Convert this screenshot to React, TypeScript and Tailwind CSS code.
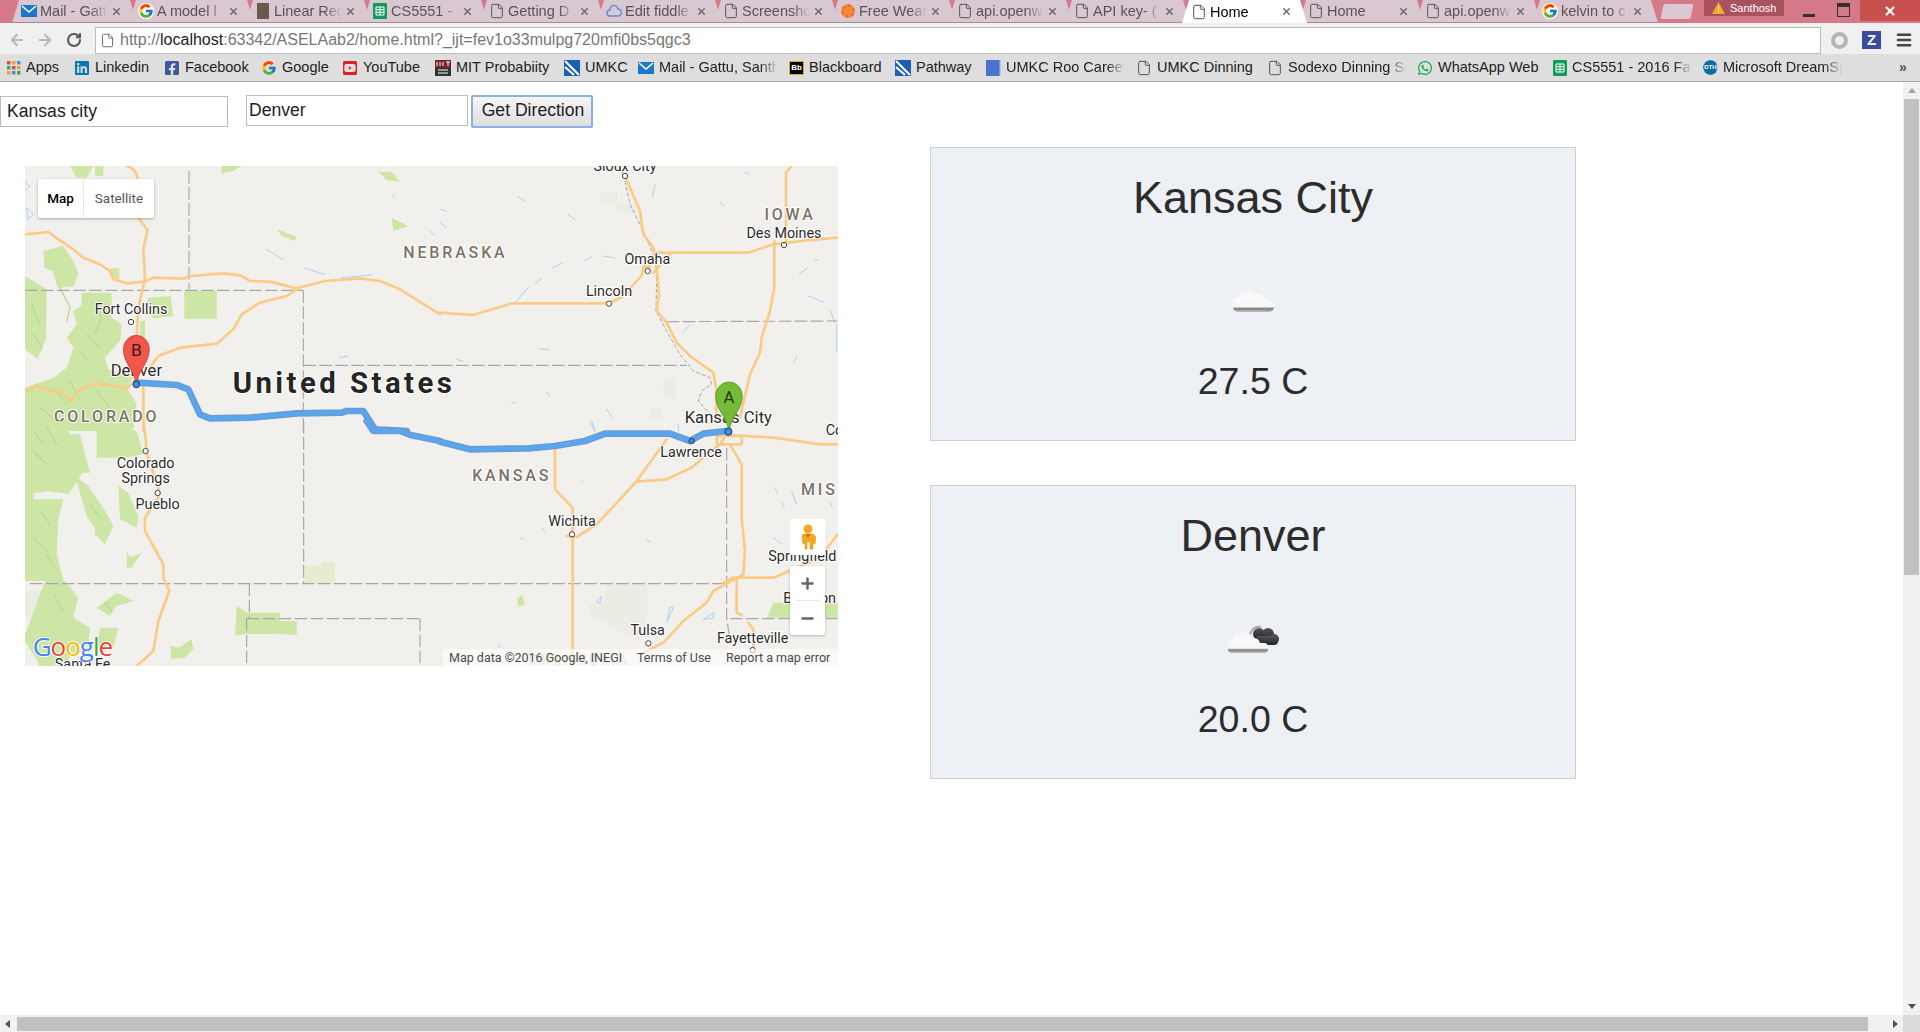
import { ArrowLeft, ArrowRight, RotateCw, File, Menu, X, Minus, Plus } from "lucide-react"
import { FaFacebookSquare, FaLinkedin, FaWhatsapp, FaYoutubeSquare } from "react-icons/fa"
import { FcGoogle } from "react-icons/fc"
import type { ReactNode } from "react"

function MailIcon() {
  return (
    <svg width="16" height="16" viewBox="0 0 16 16" className="shrink-0">
      <rect x="0" y="2" width="16" height="12" fill="#1c78c6" />
      <path d="M1 3 L8 9 L15 3" fill="none" stroke="#fff" strokeWidth="1.6" />
    </svg>
  )
}

function SheetIcon() {
  return (
    <svg width="14" height="16" viewBox="0 0 14 16" className="shrink-0">
      <rect width="14" height="16" rx="1" fill="#119a5a" />
      <path d="M3 4h8v8H3z M3 6.700h8 M3 9.300h8 M7 4v8" fill="none" stroke="#fff" strokeWidth="1" />
    </svg>
  )
}

function UmkcIcon() {
  return (
    <svg width="16" height="16" viewBox="0 0 16 16" className="shrink-0">
      <rect width="16" height="16" fill="#1a5fb4" />
      <path d="M1 1 L15 15 M1 7 L10 15" stroke="#fff" strokeWidth="2" />
    </svg>
  )
}

function MitIcon() {
  return (
    <svg width="16" height="16" viewBox="0 0 16 16" className="shrink-0">
      <rect width="16" height="16" fill="#7a2230" />
      <rect y="8" width="16" height="8" fill="#333" />
      <path d="M2 2v4 M5 2v4 M8 2v4 M11 2h4 M13 2v4 M3 10h10 M3 13h10" stroke="#fff" strokeWidth="1" />
    </svg>
  )
}

function AppsIcon() {
  const colors = ["#d9503f", "#e8a33d", "#4a90d9", "#3fa35a", "#d9503f", "#e8a33d", "#e8a33d", "#4a90d9", "#3fa35a"]
  return (
    <svg width="14" height="14" viewBox="0 0 14 14" className="shrink-0">
      {colors.map((c, i) => (
        <rect key={i} x={(i % 3) * 5} y={Math.floor(i / 3) * 5} width="3.500" height="3.500" fill={c} />
      ))}
    </svg>
  )
}

function BlankIcon() {
  return <File size={16} strokeWidth={1.5} className="shrink-0 text-[#555]" />
}

function Tab({ icon, title, active }: { icon: ReactNode; title: string; active?: boolean }) {
  return (
    <div
      className={`relative -mr-[8px] flex h-[23px] w-[125px] shrink-0 items-center gap-[3px] pl-[9px] pr-[10px] [clip-path:polygon(7px_0,calc(100%-7px)_0,100%_100%,0_100%)] ${
        active ? "z-10 bg-white text-black" : "border-b border-[#a58a96] bg-[#d9c8d1] text-[#5a5256]"
      }`}
    >
      <span className="flex w-[16px] shrink-0 justify-center">{icon}</span>
      <span className="min-w-0 flex-1 overflow-hidden whitespace-nowrap text-[14.5px] leading-[22px] [mask-image:linear-gradient(to_right,black_75%,transparent)]">
        {title}
      </span>
      <X size={11} strokeWidth={3} className="mr-[5px] shrink-0 text-[#666]" />
    </div>
  )
}

const tabs: { icon: ReactNode; title: string; active?: boolean }[] = [
  { icon: <MailIcon />, title: "Mail - Gattu" },
  { icon: <FcGoogle size={16} className="rounded-full bg-white" />, title: "A model l" },
  { icon: <span className="block h-[16px] w-[12px] bg-[#6b5a4c]" />, title: "Linear Reg" },
  { icon: <SheetIcon />, title: "CS5551 - 2" },
  { icon: <BlankIcon />, title: "Getting D" },
  {
    icon: (
      <svg width="16" height="14" viewBox="0 0 16 14" className="shrink-0">
        <path d="M4 12 a3 3 0 0 1 0-6 a4 4 0 0 1 8-1 a3 3 0 0 1 0 7 z" fill="none" stroke="#5b8fd8" strokeWidth="1.4" />
      </svg>
    ),
    title: "Edit fiddle",
  },
  { icon: <BlankIcon />, title: "Screenshot" },
  { icon: <span className="block h-[14px] w-[14px] rounded-full border-[3px] border-dotted border-[#ee6e2a] bg-[#f48a3a]" />, title: "Free Weat" },
  { icon: <BlankIcon />, title: "api.openw" },
  { icon: <BlankIcon />, title: "API key- (" },
  { icon: <BlankIcon />, title: "Home", active: true },
  { icon: <BlankIcon />, title: "Home" },
  { icon: <BlankIcon />, title: "api.openw" },
  { icon: <FcGoogle size={16} className="rounded-full bg-white" />, title: "kelvin to c" },
]

const bookmarks: { icon: ReactNode; label: string; cls: string }[] = [
  { icon: <AppsIcon />, label: "Apps", cls: "w-[67px]" },
  { icon: <FaLinkedin size={16} className="shrink-0 text-[#0a77b5]" />, label: "Linkedin", cls: "w-[90px]" },
  { icon: <FaFacebookSquare size={16} className="shrink-0 text-[#3b5998]" />, label: "Facebook", cls: "w-[97px]" },
  { icon: <FcGoogle size={16} className="shrink-0" />, label: "Google", cls: "w-[81px]" },
  { icon: <FaYoutubeSquare size={16} className="shrink-0 text-[#d9252a]" />, label: "YouTube", cls: "w-[93px]" },
  { icon: <MitIcon />, label: "MIT Probabiity", cls: "w-[129px]" },
  { icon: <UmkcIcon />, label: "UMKC", cls: "w-[74px]" },
  { icon: <MailIcon />, label: "Mail - Gattu, Santhosh", cls: "w-[151px] pr-[11px] [&>span]:[mask-image:linear-gradient(to_right,black_85%,transparent)]" },
  { icon: <span className="flex h-[14px] w-[15px] shrink-0 items-center justify-center border border-[#d9a520] bg-black text-[8px] font-bold text-white">Bb</span>, label: "Blackboard", cls: "w-[106px]" },
  { icon: <UmkcIcon />, label: "Pathway", cls: "w-[91px]" },
  { icon: <span className="block h-[16px] w-[15px] shrink-0 bg-[#4a74d0]" />, label: "UMKC Roo Career", cls: "w-[150px] pr-[11px] [&>span]:[mask-image:linear-gradient(to_right,black_85%,transparent)]" },
  { icon: <BlankIcon />, label: "UMKC Dinning", cls: "w-[131px]" },
  { icon: <BlankIcon />, label: "Sodexo Dinning Services", cls: "w-[150px] pr-[11px] [&>span]:[mask-image:linear-gradient(to_right,black_85%,transparent)]" },
  { icon: <FaWhatsapp size={16} className="shrink-0 text-[#12a84a]" />, label: "WhatsApp Web", cls: "w-[136px]" },
  { icon: <SheetIcon />, label: "CS5551 - 2016 Fall", cls: "w-[150px] pr-[11px] [&>span]:[mask-image:linear-gradient(to_right,black_85%,transparent)]" },
  { icon: <span className="flex h-[15px] w-[15px] shrink-0 items-center justify-center rounded-full bg-[#0a6ea8] text-[6px] font-bold text-white">DTH</span>, label: "Microsoft DreamSpark", cls: "w-[150px] pr-[11px] [&>span]:[mask-image:linear-gradient(to_right,black_85%,transparent)]" },
]

function BrowserChrome() {
  return (
    <header className="h-[82px] shrink-0 font-['Liberation_Sans',sans-serif]">
      <div className="relative flex h-[23px] bg-[#d67a8a] pl-[12px]">
        {tabs.map((t, i) => (
          <Tab key={i} {...t} />
        ))}
        <div className="ml-[12px] mt-[4px] h-[15px] w-[30px] -skew-x-12 rounded-[2px] bg-[#dcc8d2]" />
        <div className="ml-auto flex h-[21px] items-start">
          <div className="flex h-[16px] w-[80px] items-center gap-[5px] bg-[#a9525f] pl-[8px] text-[11px] text-white">
            <svg width="13" height="12" viewBox="0 0 13 12" className="shrink-0">
              <path d="M6.500 0L13 12H0z" fill="#f7a81c" />
              <path d="M6.500 4v4M6.500 9v1.500" stroke="#fff" strokeWidth="1.200" />
            </svg>
            Santhosh
          </div>
          <div className="ml-[8px] flex w-[34px] justify-center pt-[14px]">
            <span className="block h-[3px] w-[12px] bg-[#333]" />
          </div>
          <div className="flex w-[34px] justify-center pt-[3px]">
            <span className="block h-[14px] w-[13px] border border-t-[4px] border-[#333]" />
          </div>
          <div className="flex h-[21px] w-[60px] items-center justify-center bg-[#c8504f] text-white">
            <X size={14} strokeWidth={3.5} />
          </div>
        </div>
      </div>
      <div className="flex h-[31px] items-center bg-[#f0f0f0] pt-[3px]">
        <div className="flex w-[95px] items-center pl-[8px]">
          <ArrowLeft size={18} strokeWidth={2.5} className="text-[#b8b8b8]" />
          <ArrowRight size={18} strokeWidth={2.5} className="ml-[10px] text-[#b8b8b8]" />
          <RotateCw size={16} strokeWidth={3} className="ml-[12px] text-[#555]" />
        </div>
        <div className="flex h-[27px] w-[1726px] items-center border border-[#bdbdbd] bg-white pl-[4px] text-[16px]">
          <File size={15} strokeWidth={1.5} className="text-[#666]" />
          <span className="ml-[5px] whitespace-nowrap text-[#777]">
            http://<span className="text-[#222]">localhost</span>:63342/ASELAab2/home.html?_ijt=fev1o33mulpg720mfi0bs5qgc3
          </span>
        </div>
        <div className="ml-[10px] h-[17px] w-[17px] rounded-full border-[4px] border-[#b5b5b5]" />
        <div className="ml-[14px] flex h-[18px] w-[19px] items-center justify-center bg-[#3a4ca0] text-[15px] font-bold text-white">Z</div>
        <Menu size={18} strokeWidth={3.5} className="ml-[14px] text-[#444]" />
      </div>
      <div className="relative flex h-[28px] items-center border-b border-[#a9a9a9] bg-[#dedede] pl-[7px] text-[14.5px] text-[#222]">
        {bookmarks.map((b, i) => (
          <div key={i} className={`flex shrink-0 items-center gap-[5px] ${b.cls}`}>
            {b.icon}
            <span className="min-w-0 flex-1 overflow-hidden whitespace-nowrap">{b.label}</span>
          </div>
        ))}
        <span className="absolute left-[1899px] top-[3px] text-[14px] font-bold text-[#555]">»</span>
      </div>
    </header>
  )
}

const road = { fill: "none", stroke: "#fbcb85", strokeWidth: 8, strokeLinejoin: "round" as const, strokeLinecap: "round" as const }
const border = { fill: "none", stroke: "#a8a7a5", strokeWidth: 3.5, strokeDasharray: "38 10" }
const green = "#cde6a5"
const tan = "#ecebe4"
const water = { fill: "none", stroke: "#a9cffa", strokeWidth: 3, strokeLinecap: "round" as const }
const ridge = { fill: "none", stroke: "#bcd998", strokeWidth: 4, strokeLinecap: "round" as const }
const routePath = {
  upper: "M350 665l120 7 35 13 35 75 30 12 120-2 140-13 135-2 15-5h50l35 55 95 5",
  middle: "M1040 0l20 30h80l35 13 85 17",
  lower: "M0 62l90 23 175-3 80-7 90-15 60-22h195l60 22 40-22 70-8",
}

function City({ x, y }: { x: number; y: number }) {
  return <circle cx={x} cy={y} r="8" fill="#fff" stroke="#444" strokeWidth="3" />
}

function Label({ x, y, children, anchor = "middle", size = 43 }: { x: number; y: number; children: string; anchor?: "middle" | "start"; size?: number }) {
  return (
    <text x={x} y={y} textAnchor={anchor} fontSize={size} fill="#2a2a2a" stroke="#fff" strokeWidth="6" paintOrder="stroke" strokeLinejoin="round">
      {children}
    </text>
  )
}

function Region({ x, y, children, anchor = "middle", spacing = 8.5, size = 48 }: { x: number; y: number; children: string; anchor?: "middle" | "start"; spacing?: number; size?: number }) {
  return (
    <text x={x} y={y} textAnchor={anchor} fontSize={size} fontWeight={500} letterSpacing={spacing} fill="#7b7364" stroke="#fff" strokeWidth="6" paintOrder="stroke" strokeLinejoin="round">
      {children}
    </text>
  )
}

function Route({ d }: { d: string }) {
  return (
    <>
      <path d={d} stroke="#6b9bcf" strokeWidth="20" />
      <path d={d} stroke="#58a6f0" strokeWidth="12" />
    </>
  )
}

function MapArt() {
  return (
    <svg viewBox="25 165 813 500" className="block h-[500px] w-[813px] font-[Roboto]">
      <rect x="25" y="165" width="813" height="500" fill="#f2f0ed" />

      {/* upper left quarter */}
      <g transform="translate(20 160) scale(.33333)">
        <g fill={green}>
          <path d="M150 15h70l-20 35h-30z M605 15h60l-25 15-35 8z M1075 32l40 0 25 30-40-5z M1115 170l50 25-45 15z M770 205l60 22-5 13-40-15z" />
          <path d="M70 270l60-15 30 45 15 35-12 40-50 5-15-50-25-10z M270 322h28v33l-28-10z M382 410l70-5 8 60-60 8-18-30z M493 390h97v83h-97z" />
          <path d="M15 345l65 40-2 150-25 60-38-30z" />
          <path d="M185 395h90v75l30 20-5 50-45 50 10 35 75 25-20 30 30 50-10 80H15V680l85-30 40-30 20-60-20-30 30-40-10-40 25-15z" />
          <path d="M225 15h25v30h-25z M360 480h15v60l-15 30z" />
        </g>
        <path d="M120 380l30 60-10 40 M215 420l30 50-20 50 M200 520l40 40 M180 570l25 30 M100 680l40 50 M150 660l30 60 M230 690l40 50 M60 740l50 40 M35 430l25 60 M40 520l25 40" {...ridge} />
        <path d="M15 60l15 15-15 15z M20 140l20 20-15 15z M740 265l50 32 M855 322l60 18 M965 350l90-8 M958 590l25-5 M1115 100l10 12 M1230 210l15 15" {...water} />
        <path d="M507 30V385 M15 388H850 M850 388V810 M850 613H1260" {...border} />
        <path d="M320 15q30 10 32 35l3 120 28 38-13 55 5 92-20 85-5 90 0 150M370 670v140" {...road} />
        <path d="M15 220l70-7 30 22 45 30 30 25 50 20 30 20 10 25 40 12 55-5 25-12 90 3 20-8 100-8 50 6 30 17 60 2 80 20 85-22 105-8 60 8 60 25 120 75" {...road} />
        <path d="M385 625l30-40 65-25 110-12 50-43 25-45 55-35 80-20 35-23" {...road} />
        <path d="M15 690l35-15 40 15 40 5 18 27 27-32 45-22 40 2 60 12 25-22" {...road} />
        <Region x={1150} y={292} anchor="start">NEBRASKA</Region>
        <Region x={260} y={784}>COLORADO</Region>
      </g>

      {/* upper right quarter */}
      <g transform="translate(440 160) scale(.33333)">
        <path d="M483 95h50v30h67v30h-70v-30h-47z M670 650h38v70l-38-12z M633 740h35v35h-35z" fill={tan} />
        <path d="M232 105l22 15 M385 160l20 16 M645 70l-8 38 M840 122l10 12 M915 35l10 5 M335 322l30-15 M285 368l20-15 M225 425l40-45 M435 298l20-10 M490 285l35 6 M1105 405l45 18 M1078 338l25-18 M1172 450l12 35 M1190 490v80 M730 515l20-25 M1062 603l8-18 M300 563l28 3 M48 595l22 6 M320 695l10 8 M500 745l20 28 M450 785l15 25 M215 725h10 M1125 298h10 M0 145l20 5 M0 185l18 15" {...water} />
        <path d="M555 60l15 70 35 70 35 80 10 60-2 110 32 60 40 70 40 50 50 20 5 20-30 20-10 30 45 50" fill="none" stroke="#a8a7a5" strokeWidth="3" strokeDasharray="12 6" />
        <path d="M0 613H740 M680 482L1193 480" {...border} />
        <path d="M535 15l20 30 45 105 10 70 30 40 10 60 7 80-7 50 30 35 30 60 40 40 70 50 8 45 2 100" {...road} />
        <path d="M650 275h275l75-25 100-12 93-8" {...road} />
        <path d="M1055 15l-17 20v205 M1003 240v140l-13 70-25 80-5 45-30 65-30 130" {...road} />
        <path d="M0 455l100 7 115-35h290l40-18 60-65 5-27h20 M640 335l50-55" {...road} />
        <Region x={1050} y={178}>IOWA</Region>
        <Label x={555} y={30}>Sioux City</Label>
        <Label x={622} y={308}>Omaha</Label>
        <Label x={507} y={405}>Lincoln</Label>
        <Label x={1032} y={230}>Des Moines</Label>
        <City x={555} y={45} />
        <City x={623} y={330} />
        <City x={507} y={428} />
        <City x={1032} y={252} />
      </g>

      {/* lower left quarter */}
      <g transform="translate(20 420) scale(.33333)">
        <path d="M15 510h60v50l-30 30H15z" fill={tan} />
        <g fill={green}>
          <path d="M15 195h25v40h90l-15 60-5 100 20 85H15z M15 0h120l30 90 20 70-40 60-60-10-70 10z" />
          <path d="M165 165l40 30 60 90 15 30-25 55-25-25-10-30-20-30zM130 40h50l15 60 15 55h-30zM230 30h120l20 70-50 10-90 0z M295 195l30 20 30 70-5 35-50-25zM225 320h35v25h-35z M320 390l10 20 35-15-30 45h-15z" />
          <path d="M75 480h60l40 50-15 60 50 30-5 50-50 30-25 45H60l-10-30-40-60z M230 560l60-45 50 25-50 15-20 30z M240 620h55l-15 60-50 10z M650 555l30 20h100v25h50v42l-60-3h-90l-35 5z M450 675l25 5 40-25 5 30-25 25-40 5z" />
        </g>
        <path d="M855 432h50v-10h40v65h-90z" fill="#e5eccf" />
        <path d="M40 30l30 40 M80 20l30 50 M40 90l40 40 M60 270l30 40 M40 350l40 40 M80 400l25 40 M210 250l30 40 M100 520l30 50 M255 545l20 25" {...ridge} />
        <path d="M851 0V488 M30 488H1260 M688 488V590 M680 593H1200 M680 593V735 M1200 593V735" {...border} />
        <path d="M370 0l8 60v30l37 110v30l-40 60v40l55 100v40l18 40-33 90-15 90-50 45" {...road} />
        <Label x={377} y={140}>Colorado</Label>
        <Label x={377} y={187}>Springs</Label>
        <Label x={413} y={265}>Pueblo</Label>
        <City x={377} y={90} />
        <City x={413} y={216} />
        <Label x={188} y={745}>Santa Fe</Label>
        <text x={38} y={704} fontSize={78} fontWeight={500} stroke="#fff" strokeWidth="5" paintOrder="stroke" fontFamily="Open Sans" letterSpacing="-3">
          <tspan fill="#4285f4">G</tspan>
          <tspan fill="#ea4335">o</tspan>
          <tspan fill="#fbbc05">o</tspan>
          <tspan fill="#4285f4">g</tspan>
          <tspan fill="#34a853">l</tspan>
          <tspan fill="#ea4335">e</tspan>
        </text>
      </g>

      {/* lower right quarter */}
      <g transform="translate(440 420) scale(.33333)">
        <path d="M495 490h127v150h-62l-60-30-50-30-5-30 50-10z" fill={tan} />
        <path d="M1000 545h193v45h-212z" fill={green} />
        <path d="M232 530l15-8 8 30-20 5z" fill={green} />
        <path d="M470 540l15-15-5 20z M690 560l10 0-18 40z M790 595l30-20 0 15z M1005 200l8 18 M1055 210l15 40 M1025 245l8 15 M1170 245l8 15 M1000 350l25 20 M425 180l5 5 M305 320l10 12 M240 350l10 5 M620 355l10 8 M175 670l5 10 M455 0l10 30 M715 10v20" {...water} />
        <path d="M0 488H860 M860 80V590L870 660 M870 593H1193" {...border} />
        <path d="M345 85V205l53 55v475" {...road} />
        <path d="M380 345l30 3 60-38 70-75 50-55 90-125" {...road} />
        <path d="M590 182l90-7 75-35 45-40 40-30 20-30" {...road} />
        <path d="M870 42l130 8 140 20h53 M830 70h75V45h-75z" {...road} />
        <path d="M870 70l35 60v160l10 100-5 70-90 50-20 35-70 55-60 65-70 35" {...road} />
        <path d="M1193 340l-53 70-140 60H880l-30 15 M890 470v105l15 7 M925 605l15 20v60" {...road} />
        <text x={265} y={732} fontSize={44} fontWeight={500} letterSpacing={8} fill="#cfcac0">OKLAHOMA</text>
        <Region x={215} y={181}>KANSAS</Region>
        <Region x={1083} y={223} anchor="start">MISSOURI</Region>
        <Label x={753} y={108}>Lawrence</Label>
        <Label x={396} y={315}>Wichita</Label>
        <Label x={623} y={643}>Tulsa</Label>
        <Label x={938} y={667}>Fayetteville</Label>
        <Label x={1087} y={420}>Springfield</Label>
        <Label x={1157} y={42} anchor="start">Columbia</Label>
        <Label x={1030} y={545} anchor="start">Branson</Label>
        <City x={396} y={340} />
        <City x={625} y={667} />
        <City x={938} y={687} />
      </g>

      {/* labels that sit under the route and the pins */}
      <g transform="translate(20 160) scale(.33333)">
        <Label x={333} y={460}>Fort Collins</Label>
        <City x={333} y={483} />
        <Label x={349} y={645} size={50}>Denver</Label>
        <text x={638} y={695} fontSize={88} fontWeight={700} letterSpacing={10.4} fill="#252525" stroke="#fff" strokeWidth="6" paintOrder="stroke">United States</text>
      </g>
      <g transform="translate(440 160) scale(.33333)">
        <Label x={865} y={786} size={50}>Kansas City</Label>
      </g>

      {/* route */}
      <g fill="none" strokeLinejoin="round" strokeLinecap="round">
        <g transform="translate(20 160) scale(.33333)">
          <Route d={routePath.upper} />
        </g>
        <g transform="translate(20 420) scale(.33333)">
          <Route d={routePath.middle} />
        </g>
        <g transform="translate(440 420) scale(.33333)">
          <Route d={routePath.lower} />
        </g>
      </g>

      {/* markers */}
      <g transform="translate(20 160) scale(.33333)">
        <path d="M349 670c-8-45-39-65-39-105a39 42 0 0 1 78 0c0 40-31 60-39 105z" fill="#f2564a" stroke="#b8372e" strokeWidth="2" />
        <text x={349} y={585} textAnchor="middle" fontSize={52} fill="#3a1a18">B</text>
        <circle cx={349} cy={670} r="10" fill="#3f8fdf" stroke="#123f70" strokeWidth="3" />
      </g>
      <g transform="translate(440 160) scale(.33333)">
        <path d="M867 810c-8-45-40-65-40-105a40 42 0 0 1 80 0c0 40-32 60-40 105z" fill="#76bb38" stroke="#4a8a1c" strokeWidth="2" />
        <text x={867} y={727} textAnchor="middle" fontSize={50} fill="#23380e">A</text>
      </g>
      <g transform="translate(440 420) scale(.33333)">
        <circle cx={865} cy={32} r="11" fill="#3f8fdf" stroke="#123f70" strokeWidth="3" />
        <circle cx={755} cy={60} r="8" fill="#3f8fdf" stroke="#123f70" strokeWidth="3" />
      </g>
    </svg>
  )
}

function MapPanel() {
  return (
    <div className="relative ml-[25px] mt-[38px] h-[500px] w-[813px] overflow-hidden font-[Roboto]">
      <MapArt />
      <div className="absolute left-[13px] top-[13px] flex h-[39px] items-center rounded-[2px] bg-white pb-[1px] text-[13.5px] shadow-[0_1px_3px_rgba(0,0,0,.3)]">
        <span className="flex h-full w-[46px] items-center justify-center border-r border-[#e6e6e6] font-medium text-black">Map</span>
        <span className="flex h-full w-[70px] items-center justify-center text-[#565656]">Satellite</span>
      </div>
      <div className="absolute left-[765px] top-[353px] flex h-[36px] w-[35px] items-center justify-center rounded-t-[2px] bg-white">
        <svg width="16" height="26" viewBox="0 0 16 26">
          <circle cx="8" cy="5" r="4.500" fill="#f5a81c" />
          <path d="M3 10h10l3 3-1 7-2-1v6h-3v-7H7v7H5v-6l-2 1-1-7z" fill="#f5a81c" stroke="#d98c10" strokeWidth=".5" />
          <path d="M5.500 10L8 14l2.500-4z" fill="#d9641c" />
        </svg>
      </div>
      <div className="absolute left-[765px] top-[400px] flex h-[69px] w-[35px] flex-col items-center rounded-[2px] bg-white text-[#666] shadow-[0_1px_3px_rgba(0,0,0,.25)]">
        <span className="flex h-[34px] items-center"><Plus size={17} strokeWidth={3.5} /></span>
        <span className="h-px w-[23px] bg-[#e6e6e6]" />
        <span className="flex h-[34px] items-center"><Minus size={17} strokeWidth={3.5} /></span>
      </div>
      <div className="absolute bottom-0 right-0 flex h-[17px] w-[395px] items-center whitespace-nowrap bg-white/60 pl-[6px] pt-[1px] text-[12.5px] text-[#4a4a4a]">
        <span className="w-[188px]">Map data ©2016 Google, INEGI</span>
        <span className="w-[89px]">Terms of Use</span>
        <span>Report a map error</span>
      </div>
    </div>
  )
}

function CloudStops() {
  return (
    <>
      <stop offset="0" stopColor="#f2f2f2" />
      <stop offset=".4" stopColor="#fbfbfb" />
      <stop offset=".78" stopColor="#f6f6f6" />
      <stop offset=".86" stopColor="#7d7d7d" />
      <stop offset="1" stopColor="#c4c4c4" />
    </>
  )
}

function LightCloud() {
  return (
    <svg width="41" height="24" viewBox="0 0 41 24" className="blur-[.4px]">
      <defs>
        <linearGradient id="cl" gradientUnits="userSpaceOnUse" x1="0" y1="0" x2="0" y2="24">
          <CloudStops />
        </linearGradient>
      </defs>
      <g fill="url(#cl)">
        <circle cx="14" cy="9" r="8.500" />
        <circle cx="25" cy="12" r="6.500" />
        <circle cx="33" cy="16" r="4.500" />
        <circle cx="6" cy="15" r="6" />
        <rect x="0" y="13" width="41" height="11" rx="5" />
      </g>
    </svg>
  )
}

function DarkCloud() {
  return (
    <svg width="51" height="28" viewBox="0 0 51 28" className="mt-[2px] blur-[.4px]">
      <defs>
        <linearGradient id="cd" x1="0" y1="0" x2="0" y2="1">
          <stop offset="0" stopColor="#555" />
          <stop offset="1" stopColor="#222" />
        </linearGradient>
        <linearGradient id="cw" gradientUnits="userSpaceOnUse" x1="0" y1="6" x2="0" y2="28">
          <CloudStops />
        </linearGradient>
      </defs>
      <path d="M22 9c2-5 6-8 11-7" fill="none" stroke="#aaa" strokeWidth="2" />
      <g fill="url(#cd)">
        <circle cx="31" cy="9" r="6" />
        <circle cx="40" cy="9" r="6" />
        <circle cx="46" cy="14" r="5" />
        <rect x="28" y="11" width="22" height="9" rx="4" />
      </g>
      <g fill="url(#cw)">
        <circle cx="14" cy="14" r="8.500" />
        <circle cx="26" cy="19" r="6" />
        <circle cx="6" cy="20" r="6" />
        <rect x="0" y="18" width="40" height="10" rx="4" />
      </g>
    </svg>
  )
}

function WeatherCard({ city, temp, icon }: { city: string; temp: string; icon: ReactNode }) {
  return (
    <div className="flex h-[294px] w-[646px] flex-col items-center border border-[#cfcfcf] bg-[#edf0f5] pt-[22px] text-[#2c2c2c]">
      <h2 className="h-[56px] text-[45px] leading-[56px]">{city}</h2>
      <div className="mt-[24px] flex h-[100px] items-center justify-center">{icon}</div>
      <p className="mt-[9px] h-[44px] text-[37.5px] leading-[44px]">{temp}</p>
    </div>
  )
}

function Page() {
  return (
    <main className="flex min-w-0 flex-1 font-['Liberation_Sans',sans-serif]">
      <div className="w-[930px] shrink-0">
        <form className="flex items-start pt-[13px] text-[17.6px] text-[#222]" onSubmit={(e) => e.preventDefault()}>
          <input defaultValue="Kansas city" className="mt-[1px] h-[31px] w-[228px] border border-[#bcbcbc] px-[6px] outline-none" />
          <input defaultValue="Denver" className="ml-[18px] h-[31px] w-[222px] border border-[#bcbcbc] px-[2px] outline-none" />
          <button className="ml-[3px] h-[33px] w-[122px] rounded-[2px] border-2 border-[#8cb0e2] bg-gradient-to-b from-[#f6f6f6] to-[#dedede] pb-[2px] pl-[2px]">Get Direction</button>
        </form>
        <MapPanel />
      </div>
      <div className="flex flex-col gap-[44px] pt-[65px]">
        <WeatherCard city="Kansas City" temp="27.5 C" icon={<LightCloud />} />
        <WeatherCard city="Denver" temp="20.0 C" icon={<DarkCloud />} />
      </div>
    </main>
  )
}

function VerticalBar() {
  return (
    <div className="flex w-[17px] shrink-0 flex-col items-center bg-[#f1f1f1]">
      <span className="mt-[6px] h-0 w-0 border-x-[4px] border-b-[5px] border-x-transparent border-b-[#a3a3a3]" />
      <span className="mt-[6px] h-[476px] w-[15px] bg-[#c1c1c1]" />
      <span className="mb-[6px] mt-auto h-0 w-0 border-x-[4px] border-t-[5px] border-x-transparent border-t-[#505050]" />
    </div>
  )
}

function HorizontalBar() {
  return (
    <div className="flex h-[17px] shrink-0 items-center bg-[#f1f1f1]">
      <span className="ml-[5px] h-0 w-0 border-y-[4px] border-r-[5px] border-y-transparent border-r-[#505050]" />
      <span className="ml-[7px] h-[14px] w-[1851px] bg-[#c1c1c1]" />
      <span className="ml-[25px] h-0 w-0 border-y-[4px] border-l-[5px] border-y-transparent border-l-[#505050]" />
      <span className="ml-auto h-full w-[17px] bg-[#dcdcdc]" />
    </div>
  )
}

export default function App() {
  return (
    <div className="flex h-screen w-screen flex-col overflow-hidden bg-white">
      <BrowserChrome />
      <div className="flex min-h-0 flex-1">
        <Page />
        <VerticalBar />
      </div>
      <HorizontalBar />
    </div>
  )
}
